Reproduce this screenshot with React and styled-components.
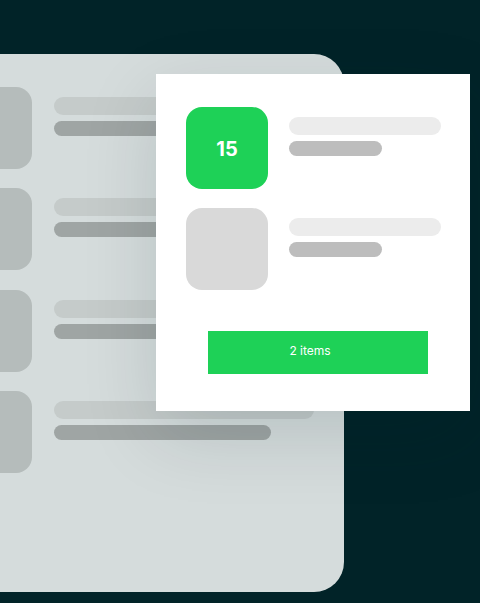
import React from 'react';
import styled, { createGlobalStyle } from 'styled-components';

const GlobalStyle = createGlobalStyle`
  html, body {
    margin: 0;
    padding: 0;
    background: #012328;
    font-family: Inter, "Noto Sans", "Liberation Sans", sans-serif;
  }
  body {
    width: 480px;
    height: 603px;
    overflow: hidden;
  }
`;

const Styled = {
  Stage: styled.div`
    position: relative;
    width: 480px;
    height: 603px;
    overflow: hidden;
    padding-top: 54px;
    box-sizing: border-box;
  `,
  Card: styled.section`
    margin-left: -80px;
    width: 424px;
    height: 538px;
    box-sizing: border-box;
    padding: 33px 30px;
    background: #d5dcdc;
    border-radius: 0 30px 30px 0;
    display: flex;
    flex-direction: column;
    gap: 19.4px;
  `,
  Row: styled.div`
    display: flex;
    gap: ${({ $gap }) => $gap}px;
  `,
  Thumb: styled.div`
    flex: none;
    width: 82px;
    height: 82px;
    border-radius: 16px;
    background: ${({ $bg }) => $bg};
    display: flex;
    align-items: center;
    justify-content: center;
    color: #ffffff;
    font-size: 20px;
    font-weight: 700;
    padding-top: 1px;
    box-sizing: border-box;
  `,
  Lines: styled.div`
    flex: 1;
    padding-top: 10px;
    display: flex;
    flex-direction: column;
    gap: 6px;
  `,
  Bar: styled.div`
    height: ${({ $h }) => $h}px;
    width: ${({ $w }) => $w};
    border-radius: ${({ $h }) => $h / 2}px;
    background: ${({ $bg }) => $bg};
  `,
  Panel: styled.aside`
    position: absolute;
    left: 156px;
    top: 74px;
    width: 314px;
    height: 337px;
    box-sizing: border-box;
    padding: 33px 29px 0 30px;
    background: #ffffff;
    box-shadow: 0 24px 70px rgba(0, 35, 40, 0.14);
    display: flex;
    flex-direction: column;
    gap: 19px;
  `,
  Button: styled.button`
    margin: 22px 0 0 22px;
    width: 220px;
    height: 43px;
    border: none;
    border-radius: 0;
    background: #1ed157;
    color: #ffffff;
    font-family: Inter, "Noto Sans", "Liberation Sans", sans-serif;
    font-size: 12px;
    padding: 0 16px 5px 0;
  `,
};

const cardRows = [0, 1, 2, 3];
const panelRows = [
  { bg: '#1ed157', label: '15' },
  { bg: '#d9d9d9', label: '' },
];

const App = () => {
  return (
    <>
      <GlobalStyle />
      <Styled.Stage>
        <Styled.Card>
          {cardRows.map((i) => (
            <Styled.Row key={i} $gap={22}>
              <Styled.Thumb $bg="#b5bcbb" />
              <Styled.Lines>
                <Styled.Bar $h={18} $w="100%" $bg="#c5cbca" />
                <Styled.Bar $h={15} $w="217px" $bg="#9fa5a4" />
              </Styled.Lines>
            </Styled.Row>
          ))}
        </Styled.Card>
        <Styled.Panel>
          {panelRows.map((row, i) => (
            <Styled.Row key={i} $gap={21}>
              <Styled.Thumb $bg={row.bg}>{row.label}</Styled.Thumb>
              <Styled.Lines>
                <Styled.Bar $h={18} $w="100%" $bg="#ececec" />
                <Styled.Bar $h={15} $w="93px" $bg="#bdbdbd" />
              </Styled.Lines>
            </Styled.Row>
          ))}
          <Styled.Button>2 items</Styled.Button>
        </Styled.Panel>
      </Styled.Stage>
    </>
  );
};

export default App;
